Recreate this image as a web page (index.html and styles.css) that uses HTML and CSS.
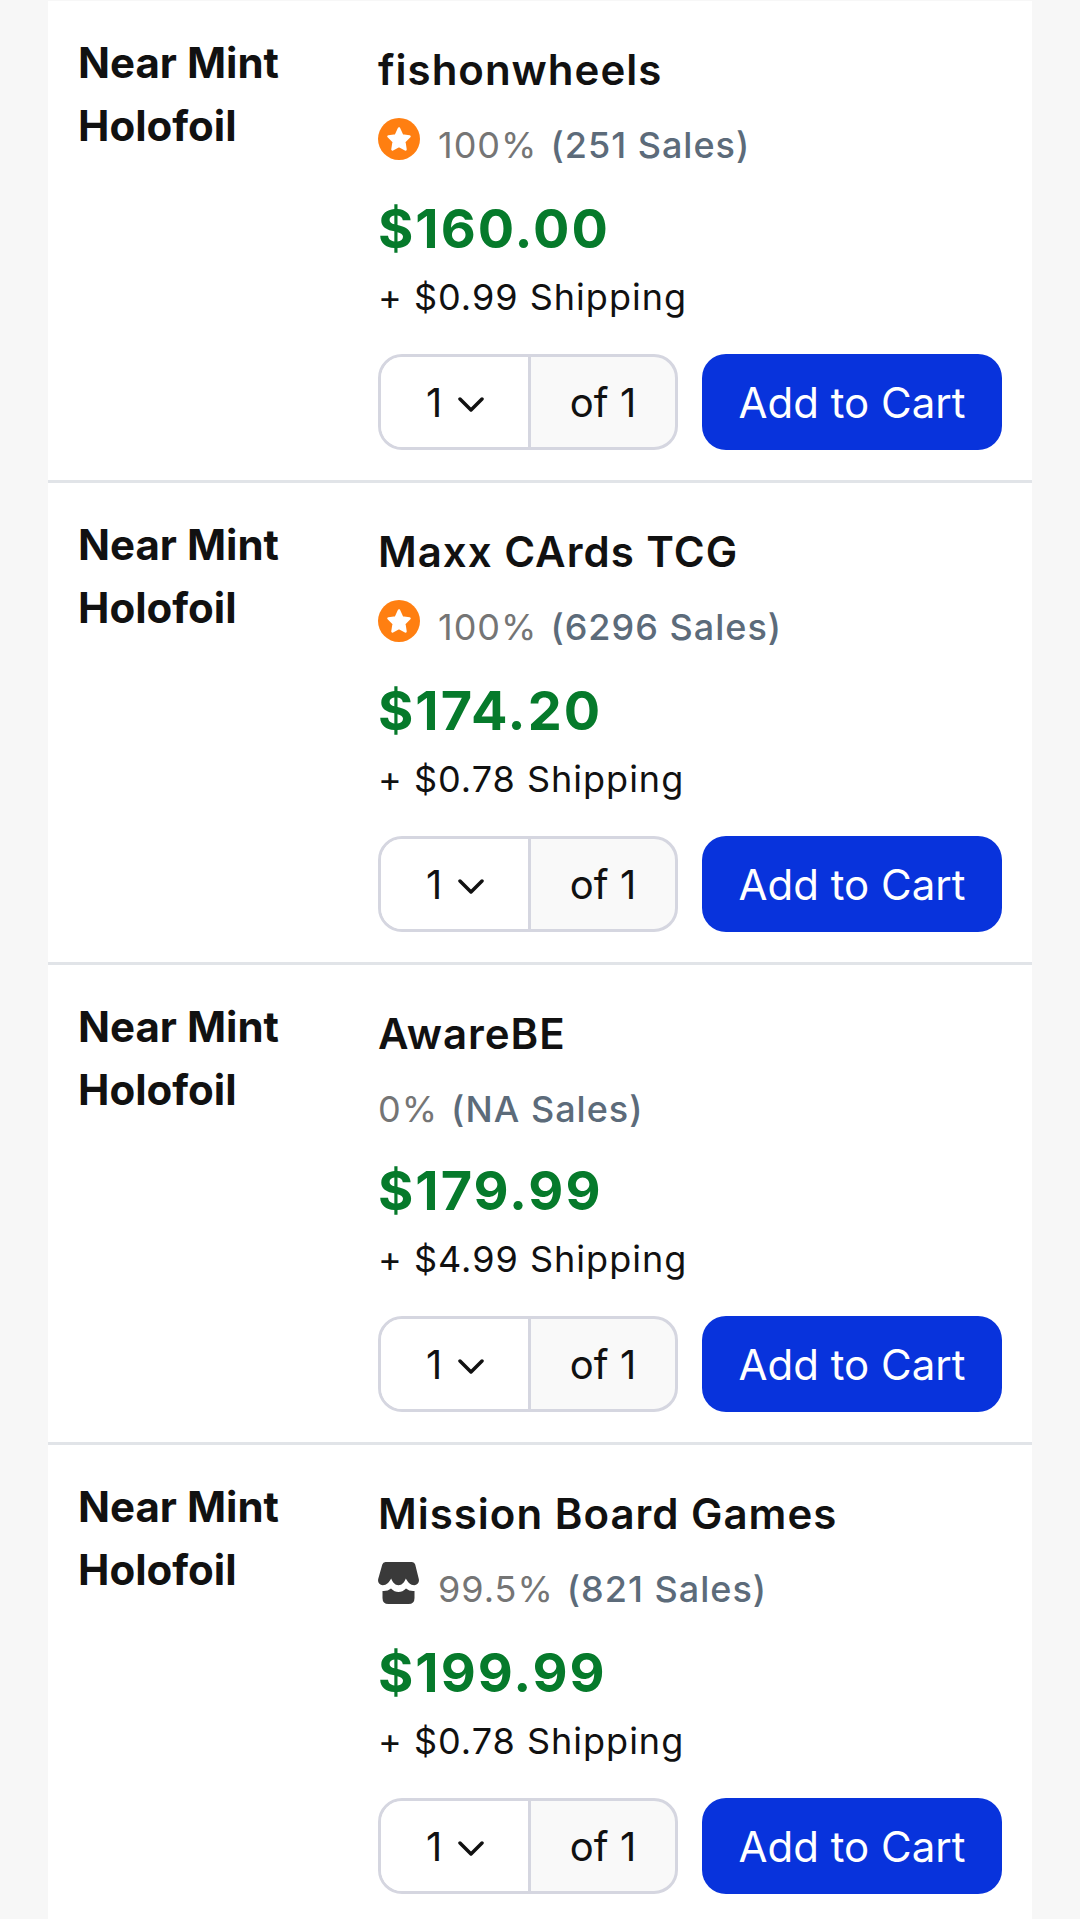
FILE: index.html
```html
<!DOCTYPE html>
<html lang="en">
<head>
<meta charset="utf-8">
<meta name="viewport" content="width=device-width, initial-scale=1">
<title>Listings</title>
<link rel="stylesheet" href="styles.css">
</head>
<body>
<svg class="sprite" aria-hidden="true">
  <symbol id="gold-star" viewBox="0 0 42 42">
    <circle cx="21" cy="21" r="21" fill="#ff7f11"/>
    <path d="M21 10.500l3.200 7 7.300.9-5.200 5.300 1.200 7.800-6.500-3.600-6.500 3.600 1.200-7.800-5.200-5.300 7.300-.9z" fill="#fff" stroke="#fff" stroke-width="2.500" stroke-linejoin="round"/>
  </symbol>
  <symbol id="storefront" viewBox="0 0 42 42">
    <path d="M7.500 0h26.500q2.500 0 3.200 2.500L40.800 17c.8 3.500-1.600 6.200-4.500 6.200-4 0-6.500-3-8.500-6.700-1.500 4-4 6.700-7.300 6.700S14.700 20.500 13.200 16.500c-2 3.700-4.500 6.700-8.500 6.700C1.800 23.200-.6 20.500.2 17L4.300 2.500Q5 0 7.500 0z" fill="#3a3a3a"/>
    <path d="M4.500 29q5 .5 8.500-2.500 3.500 3.500 7.500 3.500t7.500-3.500q3.500 3 8.500 2.500v7q0 6-6 6h-20q-6 0-6-6z" fill="#3a3a3a"/>
  </symbol>
  <symbol id="chevron" viewBox="0 0 26 16">
    <path d="M2 2l11 11L24 2" fill="none" stroke="#111" stroke-width="3.500" stroke-linecap="round" stroke-linejoin="round"/>
  </symbol>
</svg>
<main class="listings">
  <article class="listing">
    <h2 class="condition">Near Mint Holofoil</h2>
    <div class="details">
      <a class="seller" href="#">fishonwheels</a>
      <p class="rating"><svg class="badge" role="img" aria-label="Gold star seller"><use href="#gold-star"/></svg><span class="percent">100%</span><span class="sales">(251 Sales)</span></p>
      <p class="price">$160.00</p>
      <p class="shipping">+ $0.99 Shipping</p>
      <div class="actions">
        <div class="quantity"><div class="picker"><select class="select" aria-label="Quantity"><option>1</option></select><svg class="chevron" aria-hidden="true"><use href="#chevron"/></svg></div><span class="available">of 1</span></div>
        <button class="add" type="button">Add to Cart</button>
      </div>
    </div>
  </article>
  <article class="listing">
    <h2 class="condition">Near Mint Holofoil</h2>
    <div class="details">
      <a class="seller" href="#">Maxx CArds TCG</a>
      <p class="rating"><svg class="badge" role="img" aria-label="Gold star seller"><use href="#gold-star"/></svg><span class="percent">100%</span><span class="sales">(6296 Sales)</span></p>
      <p class="price">$174.20</p>
      <p class="shipping">+ $0.78 Shipping</p>
      <div class="actions">
        <div class="quantity"><div class="picker"><select class="select" aria-label="Quantity"><option>1</option></select><svg class="chevron" aria-hidden="true"><use href="#chevron"/></svg></div><span class="available">of 1</span></div>
        <button class="add" type="button">Add to Cart</button>
      </div>
    </div>
  </article>
  <article class="listing">
    <h2 class="condition">Near Mint Holofoil</h2>
    <div class="details">
      <a class="seller" href="#">AwareBE</a>
      <p class="rating"><span class="percent">0%</span><span class="sales">(NA Sales)</span></p>
      <p class="price">$179.99</p>
      <p class="shipping">+ $4.99 Shipping</p>
      <div class="actions">
        <div class="quantity"><div class="picker"><select class="select" aria-label="Quantity"><option>1</option></select><svg class="chevron" aria-hidden="true"><use href="#chevron"/></svg></div><span class="available">of 1</span></div>
        <button class="add" type="button">Add to Cart</button>
      </div>
    </div>
  </article>
  <article class="listing">
    <h2 class="condition">Near Mint Holofoil</h2>
    <div class="details">
      <a class="seller" href="#">Mission Board Games</a>
      <p class="rating"><svg class="badge" role="img" aria-label="Local game store"><use href="#storefront"/></svg><span class="percent">99.5%</span><span class="sales">(821 Sales)</span></p>
      <p class="price">$199.99</p>
      <p class="shipping">+ $0.78 Shipping</p>
      <div class="actions">
        <div class="quantity"><div class="picker"><select class="select" aria-label="Quantity"><option>1</option></select><svg class="chevron" aria-hidden="true"><use href="#chevron"/></svg></div><span class="available">of 1</span></div>
        <button class="add" type="button">Add to Cart</button>
      </div>
    </div>
  </article>
</main>
</body>
</html>
```
FILE: styles.css
```css
* {
  box-sizing: border-box;
}

body {
  margin: 0;
  background: #f7f7f7;
  color: #111;
  font-family: Inter, "Liberation Sans", sans-serif;
  font-size: 42px;
  line-height: 63px;
}

h2,
p {
  margin: 0;
}

.sprite {
  display: none;
}

.listings {
  padding: 1px 48px 0;
}

.listing {
  display: grid;
  grid-template-columns: 300px 1fr;
  padding: 30px;
  background: #fff;
  border-bottom: 3px solid #e1e4e8;
}

.condition {
  padding-right: 60px;
  font-size: 42px;
  font-weight: 700;
}

.details {
  display: flex;
  flex-direction: column;
  align-items: flex-start;
  padding-top: 7px;
}

.seller {
  color: inherit;
  font-weight: 600;
  letter-spacing: 1px;
  text-decoration: none;
}

.rating {
  display: flex;
  align-items: flex-start;
  min-height: 56px;
  margin: 17px 0 16px;
  font-size: 36px;
  line-height: 54px;
  letter-spacing: 1px;
}

.badge {
  width: 42px;
  height: 42px;
  margin: 0 18px 16px 0;
}

.percent {
  margin-right: 13px;
  color: #757575;
}

.sales {
  color: #5c6b7a;
  font-weight: 500;
}

.price {
  color: #067a2b;
  font-size: 54px;
  font-weight: 700;
  line-height: 74px;
  letter-spacing: 2px;
}

.shipping {
  margin-bottom: 26px;
  font-size: 36px;
  line-height: 62px;
  letter-spacing: 1px;
}

.actions {
  display: grid;
  grid-template-columns: 1fr 1fr;
  gap: 24px;
  width: 100%;
}

.quantity {
  display: grid;
  grid-template-columns: 150px 1fr;
  height: 96px;
  overflow: hidden;
  background: #f9f9f9;
  border: 3px solid #d5d6e0;
  border-radius: 24px;
}

.picker {
  position: relative;
  background: #fff;
  border-right: 3px solid #d5d6e0;
}

.select {
  width: 100%;
  height: 100%;
  padding: 0 0 0 45px;
  appearance: none;
  background: transparent;
  border: 0;
  color: inherit;
  font: inherit;
  font-size: 40px;
}

.chevron {
  position: absolute;
  top: 40px;
  right: 44px;
  width: 26px;
  height: 16px;
  pointer-events: none;
}

.available {
  align-self: center;
  font-size: 40px;
  text-align: center;
}

.add {
  padding: 0;
  background: #0833dc;
  border: 0;
  border-radius: 24px;
  color: #fff;
  font: inherit;
  font-size: 42px;
}
```
